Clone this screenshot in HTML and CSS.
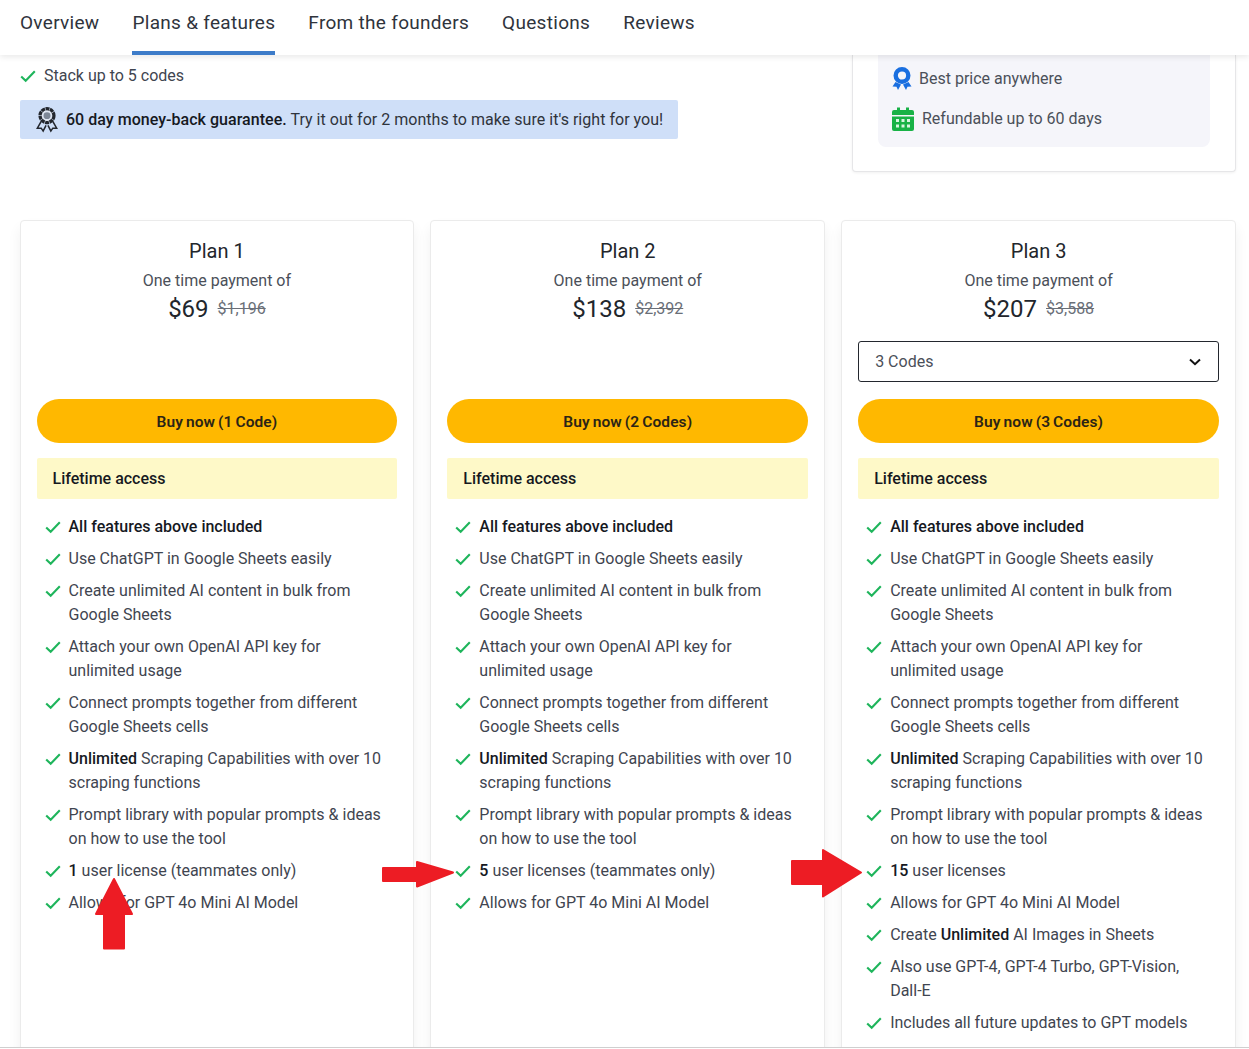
FILE: index.html
```html
<!DOCTYPE html>
<html lang="en">
<head>
<meta charset="utf-8">
<title>Plans &amp; features</title>
<link rel="stylesheet" href="styles.css">
</head>
<body>
<svg class="sprite" aria-hidden="true">
  <symbol id="check" viewBox="0 0 16 16"><path d="M1.2 8.400 5.700 12.800 14.800 3.200" fill="none" stroke="currentColor" stroke-width="2.100"/></symbol>
</svg>
<header class="tabs">
  <a class="tab">Overview</a>
  <a class="tab tab-active">Plans &amp; features</a>
  <a class="tab">From the founders</a>
  <a class="tab">Questions</a>
  <a class="tab">Reviews</a>
</header>
<main class="page">
  <section class="top">
    <div class="top-left">
      <p class="stack"><svg class="check"><use href="#check"/></svg>Stack up to 5 codes</p>
      <p class="guarantee">
        <svg class="guarantee-icon" viewBox="0 0 24 28"><circle cx="12" cy="10" r="7.200" fill="#dfe6f2" stroke="#23272e" stroke-width="3.400" stroke-dasharray="4 .6"/><circle cx="12" cy="10" r="3.600" fill="#7d8796"/><path d="M6 16 2 23l4 0 2 3 3-6M18 16l4 7-4 0-2 3-3-6" fill="none" stroke="#23272e" stroke-width="1.600"/></svg>
        <span><b>60 day money-back guarantee.</b> Try it out for 2 months to make sure it's right for you!</span>
      </p>
    </div>
    <aside class="deal">
      <div class="deal-panel">
        <p class="deal-row">
          <svg class="deal-medal" viewBox="0 0 20 24"><circle cx="10" cy="8.500" r="6.300" fill="none" stroke="#1a6fe0" stroke-width="4.400"/><path d="M3.500 15 .5 19.500 4.500 19.800 6 23 9 17.500ZM16.500 15 19.500 19.500 15.500 19.800 14 23 11 17.500Z" fill="#1a6fe0"/></svg>
          Best price anywhere
        </p>
        <p class="deal-row">
          <svg class="deal-cal" viewBox="0 0 22 24"><path d="M2 3h3V0.500h3V3h6V0.500h3V3h3a2 2 0 0 1 2 2v3H0V5a2 2 0 0 1 2-2Z" fill="#18b246"/><path d="M0 9.500h22V22a2 2 0 0 1-2 2H2a2 2 0 0 1-2-2Z" fill="#18b246"/><path d="M4 12h3v3H4zM9.500 12h3v3h-3zM15 12h3v3h-3zM4 17.500h3v3H4zM9.500 17.500h3v3h-3zM15 17.500h3v3h-3z" fill="#d8f5e0"/></svg>
          Refundable up to 60 days
        </p>
      </div>
    </aside>
  </section>

  <section class="plans">
    <article class="plan">
      <h2 class="plan-name">Plan 1</h2>
      <p class="plan-sub">One time payment of</p>
      <p class="plan-price"><span class="price-now">$69</span><s class="price-old">$1,196</s></p>
      <div class="select-slot"></div>
      <button class="buy">Buy now (1 Code)</button>
      <p class="access">Lifetime access</p>
      <ul class="features">
        <li class="feature feature-strong"><svg class="check"><use href="#check"/></svg><span>All features above included</span></li>
        <li class="feature"><svg class="check"><use href="#check"/></svg><span>Use ChatGPT in Google Sheets easily</span></li>
        <li class="feature"><svg class="check"><use href="#check"/></svg><span>Create unlimited AI content in bulk from Google Sheets</span></li>
        <li class="feature"><svg class="check"><use href="#check"/></svg><span>Attach your own OpenAI API key for unlimited usage</span></li>
        <li class="feature"><svg class="check"><use href="#check"/></svg><span>Connect prompts together from different Google Sheets cells</span></li>
        <li class="feature"><svg class="check"><use href="#check"/></svg><span><b>Unlimited</b> Scraping Capabilities with over 10 scraping functions</span></li>
        <li class="feature"><svg class="check"><use href="#check"/></svg><span>Prompt library with popular prompts &amp; ideas on how to use the tool</span></li>
        <li class="feature"><svg class="check"><use href="#check"/></svg><span><b>1</b> user license (teammates only)</span></li>
        <li class="feature"><svg class="check"><use href="#check"/></svg><span>Allows for GPT 4o Mini AI Model</span></li>
      </ul>
    </article>

    <article class="plan">
      <h2 class="plan-name">Plan 2</h2>
      <p class="plan-sub">One time payment of</p>
      <p class="plan-price"><span class="price-now">$138</span><s class="price-old">$2,392</s></p>
      <div class="select-slot"></div>
      <button class="buy">Buy now (2 Codes)</button>
      <p class="access">Lifetime access</p>
      <ul class="features">
        <li class="feature feature-strong"><svg class="check"><use href="#check"/></svg><span>All features above included</span></li>
        <li class="feature"><svg class="check"><use href="#check"/></svg><span>Use ChatGPT in Google Sheets easily</span></li>
        <li class="feature"><svg class="check"><use href="#check"/></svg><span>Create unlimited AI content in bulk from Google Sheets</span></li>
        <li class="feature"><svg class="check"><use href="#check"/></svg><span>Attach your own OpenAI API key for unlimited usage</span></li>
        <li class="feature"><svg class="check"><use href="#check"/></svg><span>Connect prompts together from different Google Sheets cells</span></li>
        <li class="feature"><svg class="check"><use href="#check"/></svg><span><b>Unlimited</b> Scraping Capabilities with over 10 scraping functions</span></li>
        <li class="feature"><svg class="check"><use href="#check"/></svg><span>Prompt library with popular prompts &amp; ideas on how to use the tool</span></li>
        <li class="feature"><svg class="check"><use href="#check"/></svg><span><b>5</b> user licenses (teammates only)</span></li>
        <li class="feature"><svg class="check"><use href="#check"/></svg><span>Allows for GPT 4o Mini AI Model</span></li>
      </ul>
    </article>

    <article class="plan">
      <h2 class="plan-name">Plan 3</h2>
      <p class="plan-sub">One time payment of</p>
      <p class="plan-price"><span class="price-now">$207</span><s class="price-old">$3,588</s></p>
      <div class="select-slot">
        <div class="select"><span>3 Codes</span>
          <svg class="chevron" viewBox="0 0 12 8"><path d="M1 1.500 6 6.200 11 1.500" fill="none" stroke="#111" stroke-width="2"/></svg>
        </div>
      </div>
      <button class="buy">Buy now (3 Codes)</button>
      <p class="access">Lifetime access</p>
      <ul class="features">
        <li class="feature feature-strong"><svg class="check"><use href="#check"/></svg><span>All features above included</span></li>
        <li class="feature"><svg class="check"><use href="#check"/></svg><span>Use ChatGPT in Google Sheets easily</span></li>
        <li class="feature"><svg class="check"><use href="#check"/></svg><span>Create unlimited AI content in bulk from Google Sheets</span></li>
        <li class="feature"><svg class="check"><use href="#check"/></svg><span>Attach your own OpenAI API key for unlimited usage</span></li>
        <li class="feature"><svg class="check"><use href="#check"/></svg><span>Connect prompts together from different Google Sheets cells</span></li>
        <li class="feature"><svg class="check"><use href="#check"/></svg><span><b>Unlimited</b> Scraping Capabilities with over 10 scraping functions</span></li>
        <li class="feature"><svg class="check"><use href="#check"/></svg><span>Prompt library with popular prompts &amp; ideas on how to use the tool</span></li>
        <li class="feature"><svg class="check"><use href="#check"/></svg><span><b>15</b> user licenses</span></li>
        <li class="feature"><svg class="check"><use href="#check"/></svg><span>Allows for GPT 4o Mini AI Model</span></li>
        <li class="feature"><svg class="check"><use href="#check"/></svg><span>Create <b>Unlimited</b> AI Images in Sheets</span></li>
        <li class="feature"><svg class="check"><use href="#check"/></svg><span>Also use GPT-4, GPT-4 Turbo, GPT-Vision, Dall-E</span></li>
        <li class="feature"><svg class="check"><use href="#check"/></svg><span>Includes all future updates to GPT models</span></li>
      </ul>
    </article>
  </section>

  <svg class="arrow arrow-up" viewBox="0 0 40 73"><path d="M20 2 38 37H30V71.500H10V37H2Z" fill="#ed1c24" stroke="#ed1c24" stroke-width="2" stroke-linejoin="round"/></svg>
  <svg class="arrow arrow-mid" viewBox="0 0 73 27"><path d="M1 7H35V1L71 11.500 35 25.500V20H1Z" fill="#ed1c24" stroke="#ed1c24" stroke-width="2" stroke-linejoin="round"/></svg>
  <svg class="arrow arrow-big" viewBox="0 0 72 49"><path d="M1 12H32V1L70 23.500 32 47.500V35H1Z" fill="#ed1c24" stroke="#ed1c24" stroke-width="2" stroke-linejoin="round"/></svg>
</main>
<footer class="edge"></footer>
</body>
</html>
```
FILE: styles.css
```css
* { box-sizing: border-box; }
html, body { margin: 0; height: 1049px; overflow: hidden; background: #fff; }
body {
  display: flex;
  flex-direction: column;
  font-family: Roboto, "Liberation Sans", sans-serif;
  font-size: 16px;
  line-height: 24px;
  color: #3f4550;
}
p, h2, ul { margin: 0; padding: 0; }
b { font-weight: 500; color: #16191f; }
.sprite { display: none; }

.tabs {
  position: relative;
  z-index: 2;
  flex: none;
  height: 55px;
  display: flex;
  gap: 33px;
  padding-left: 20px;
  background: #fff;
  box-shadow: 0 2px 6px rgba(0, 0, 0, .09);
}
.tab {
  height: 55px;
  padding-top: 11px;
  font-size: 19px;
  font-weight: 400;
  letter-spacing: .3px;
  color: #2f343c;
}
.tab-active { border-bottom: 4px solid #3d7cc9; }

.page { position: relative; flex: 1; min-height: 0; overflow: hidden; }

.top { display: flex; justify-content: space-between; padding: 0 13px 0 20px; height: 165px; }
.top-left { padding-top: 9px; }
.stack { display: flex; align-items: center; gap: 8px; color: #3f4550; }
.guarantee {
  display: flex;
  align-items: center;
  gap: 7px;
  width: 658px;
  height: 39px;
  margin-top: 12px;
  padding-left: 15px;
  background: #cfdff8;
  border-radius: 2px;
  color: #2f343c;
  letter-spacing: .03px;
}
.guarantee-icon { width: 24px; height: 27px; flex: none; }

.deal {
  width: 384px;
  height: 117px;
  padding: 0 25px;
  background: #fff;
  border: 1px solid #e6e6e8;
  border-top: 0;
  border-radius: 0 0 4px 4px;
  box-shadow: 0 1px 3px rgba(0, 0, 0, .06);
}
.deal-panel {
  height: 92px;
  padding: 4px 14px 0;
  background: #f5f5fa;
  border-radius: 0 0 8px 8px;
}
.deal-row { display: flex; align-items: center; height: 40px; color: #4b5059; }
.deal-medal { width: 20px; height: 24px; margin-right: 7px; }
.deal-cal { width: 22px; height: 24px; margin-right: 8px; }

.plans {
  display: grid;
  grid-template-columns: repeat(3, 1fr);
  gap: 16px;
  padding: 0 13px 0 19.500px;
}
.plan {
  height: 860px;
  padding: 16px 16px 0;
  background: #fff;
  border: 1px solid #ebebeb;
  border-radius: 4px;
  box-shadow: 0 8px 14px rgba(0, 0, 0, .06);
  text-align: center;
}
.plan-name { font-size: 20px; line-height: 28px; font-weight: 400; color: #22262c; }
.plan-sub { margin-top: 4px; color: #4b5059; }
.plan-price { display: flex; justify-content: center; align-items: center; gap: 9px; height: 32px; margin-top: 0; }
.price-now { font-size: 24px; color: #22262c; }
.price-old { color: #6a6f78; }
.select-slot { height: 41px; margin-top: 16px; }
.select {
  display: flex;
  justify-content: space-between;
  align-items: center;
  height: 41px;
  padding: 0 17px 0 16px;
  background: #fff;
  border: 1px solid #23272e;
  border-radius: 3px;
  color: #4b5059;
}
.chevron { width: 12px; height: 8px; }
.buy {
  display: block;
  width: 100%;
  height: 44px;
  margin-top: 17px;
  padding: 1px 0 0;
  border: 0;
  border-radius: 22px;
  background: #ffb800;
  font-family: Roboto, "Liberation Sans", sans-serif;
  font-size: 15.500px;
  font-weight: 600;
  word-spacing: -1px;
  letter-spacing: .1px;
  color: #2b2416;
}
.access {
  height: 41px;
  margin-top: 15px;
  padding: 9px 16px 8px;
  background: #fef9c8;
  border-radius: 2px;
  text-align: left;
  font-weight: 500;
  color: #16191f;
}
.features {
  display: flex;
  flex-direction: column;
  gap: 8px;
  margin-top: 16px;
  padding-left: 8px;
  list-style: none;
  text-align: left;
}
.feature { display: flex; gap: 8px; padding-right: 8px; }
.feature-strong { font-weight: 500; color: #16191f; }
.check { flex: none; width: 16px; height: 16px; margin-top: 4px; color: #1fb55c; }
.stack .check { margin-top: 0; }

.arrow { position: absolute; z-index: 1; display: block; }
.arrow-up { left: 94px; top: 822px; width: 40px; height: 73px; }
.arrow-mid { left: 382px; top: 806px; width: 73px; height: 27px; }
.arrow-big { left: 791px; top: 794px; width: 72px; height: 49px; }

.edge { flex: none; height: 2px; background: #fff; border-top: 1px solid #cfcfcf; position: relative; z-index: 2; }
```
